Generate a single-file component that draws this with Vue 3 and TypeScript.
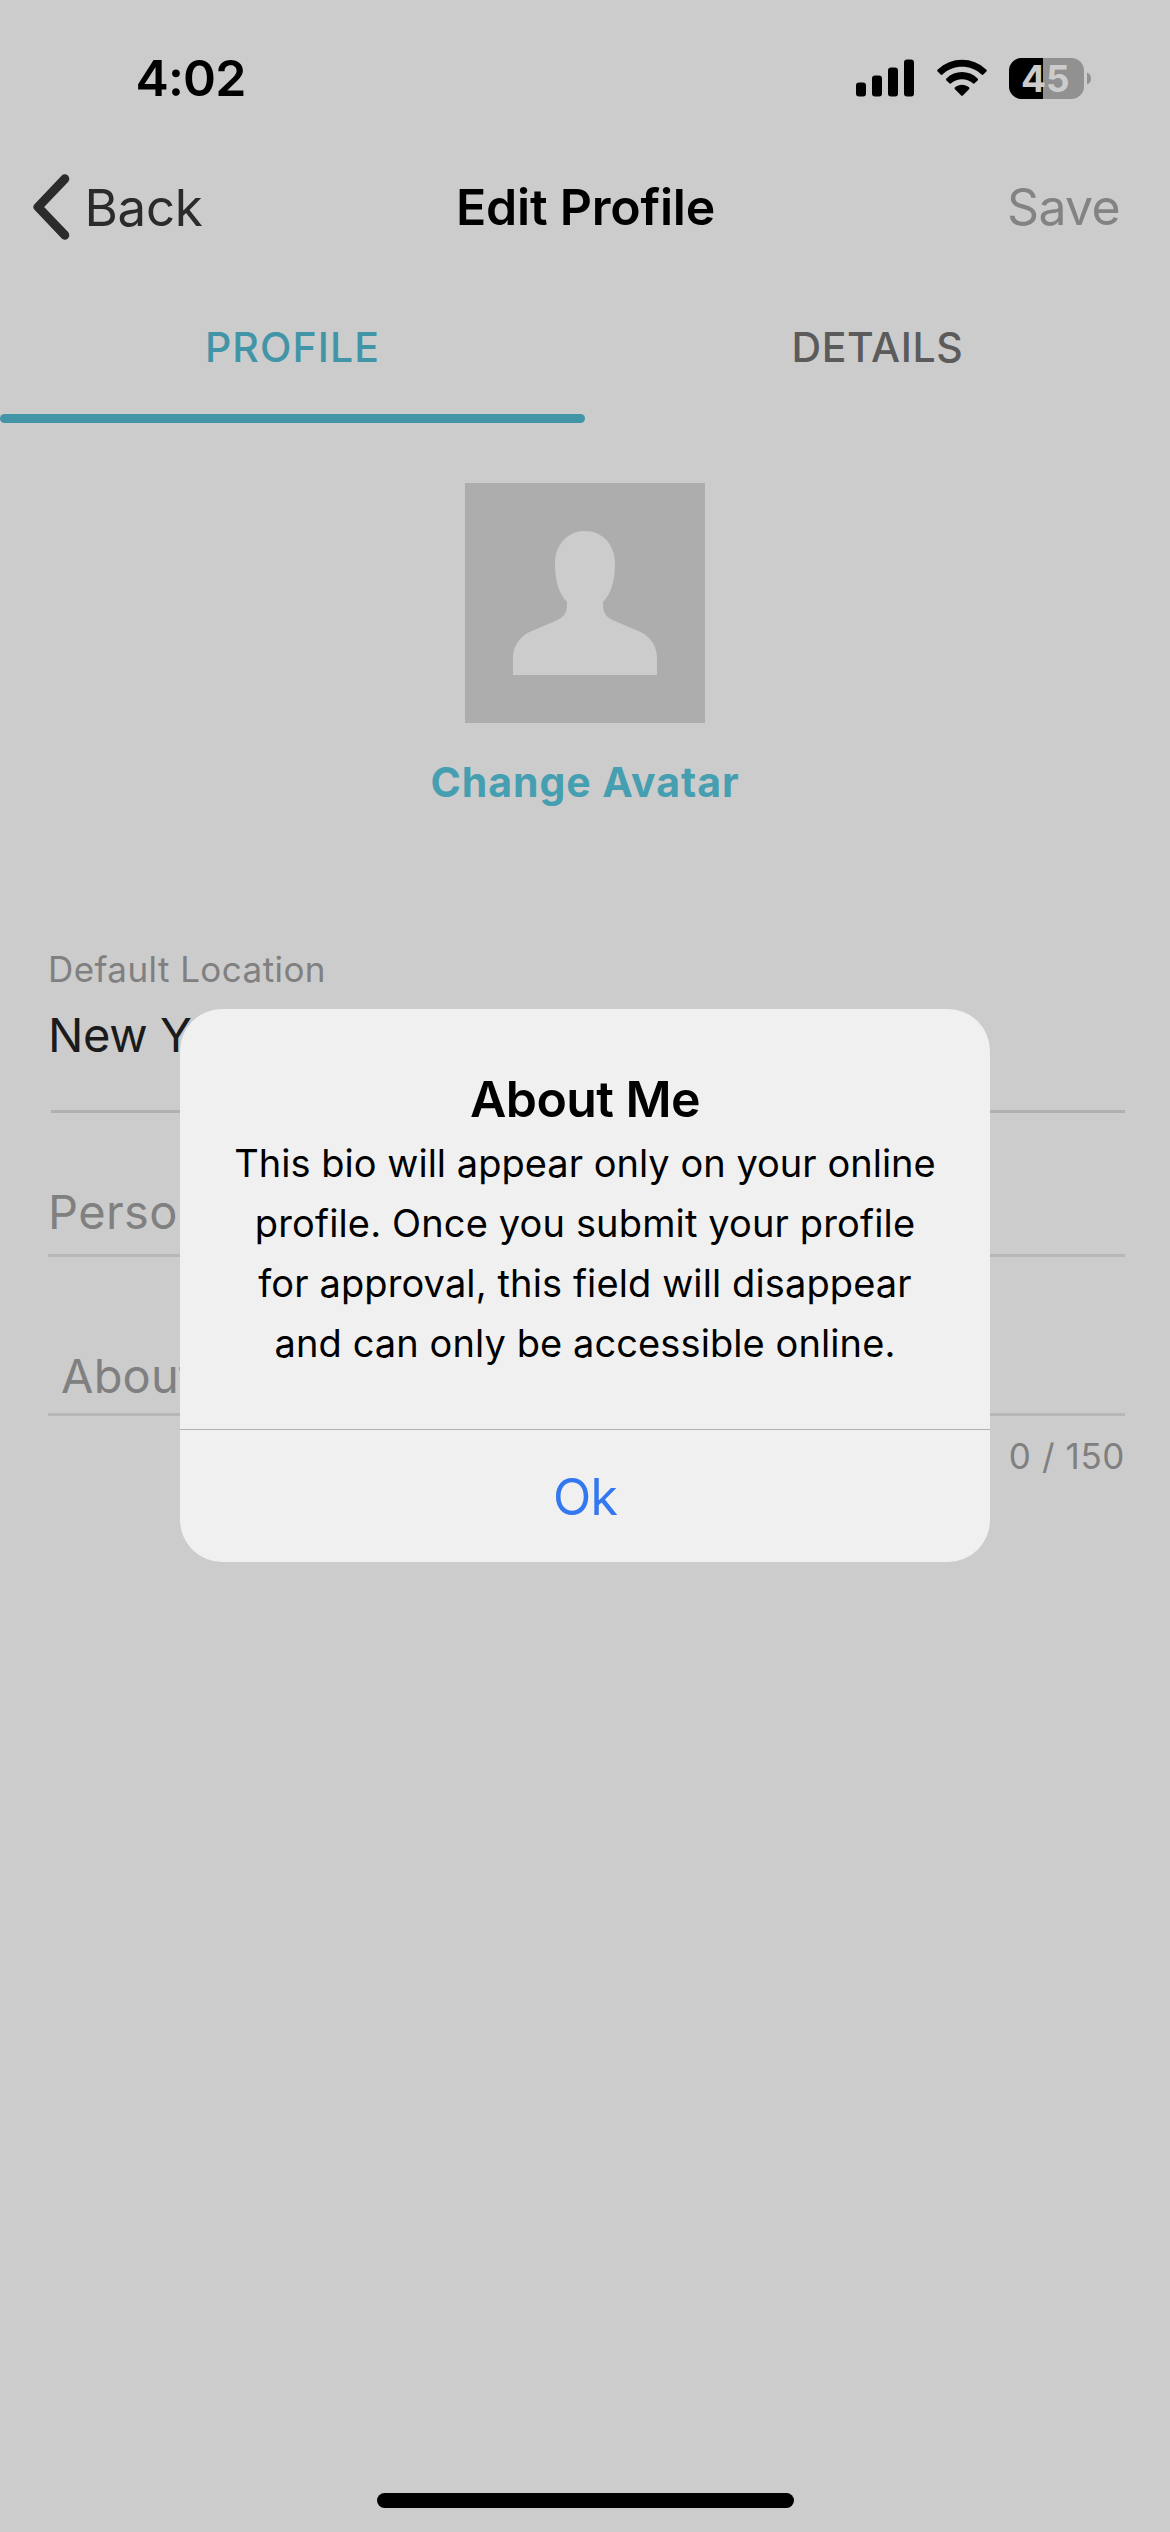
<script setup lang="ts">
import { ref } from 'vue'

interface Tab {
  id: string
  label: string
}

const tabs: Tab[] = [
  { id: 'profile', label: 'PROFILE' },
  { id: 'details', label: 'DETAILS' },
]
const activeTab = ref('profile')
const bioLimit = 150
const bio = ref('')

const dialogLines = [
  { text: 'This bio will appear only on your online', spacing: 0.02 },
  { text: 'profile. Once you submit your profile', spacing: 0.14 },
  { text: 'for approval, this field will disappear', spacing: 0.11 },
  { text: 'and can only be accessible online.', spacing: 0.09 },
]
</script>

<template>
  <div class="screen">
    <header class="status-bar">
      <span class="time">4:02</span>
      <div class="status-icons">
        <svg class="signal" width="58" height="38" viewBox="0 0 58 38">
          <rect x="0" y="23.5" width="10" height="14" rx="3" />
          <rect x="16" y="16.5" width="10" height="21" rx="3" />
          <rect x="32" y="8.5" width="10" height="29" rx="3" />
          <rect x="48" y="0.5" width="10" height="37" rx="3" />
        </svg>
        <svg class="wifi" width="50" height="38" viewBox="0 0 50 38">
          <path d="M0.8 10.6 C14 -2.7 36 -2.7 49.2 10.6 Q50.3 11.6 49.3 12.6 L46.4 15.5 Q45.5 16.3 44.6 15.5 C33.6 5.2 16.4 5.2 5.4 15.5 Q4.5 16.3 3.6 15.5 L0.7 12.6 Q-0.3 11.6 0.8 10.6Z" />
          <path d="M9.4 19.4 C18.2 11 31.8 11 40.6 19.4 Q41.6 20.4 40.6 21.4 L37.6 24.3 Q36.7 25.1 35.8 24.3 C29.6 18.8 20.4 18.8 14.2 24.3 Q13.3 25.1 12.4 24.3 L9.4 21.4 Q8.4 20.4 9.4 19.4Z" />
          <path d="M18 28.2 C22 24.8 28 24.8 32 28.2 Q33 29.2 32 30.2 L25.8 36.6 Q25 37.4 24.2 36.6 L18 30.2 Q17 29.2 18 28.2Z" />
        </svg>
        <svg class="battery" width="83" height="41" viewBox="0 0 83 41">
          <path d="M34 0H62.5A12.5 12.5 0 0 1 75 12.5V28.5A12.5 12.5 0 0 1 62.5 41H34Z" fill="#919191" />
          <path d="M34 0H12.5A12.5 12.5 0 0 0 0 12.5V28.5A12.5 12.5 0 0 0 12.5 41H34Z" fill="#000" />
          <path d="M78 14.5C83.300 16 83.300 25 78 26.5Z" fill="#919191" />
          <text x="12" y="34" class="battery-level">45</text>
        </svg>
      </div>
    </header>

    <nav class="nav-bar">
      <button class="back" type="button">
        <svg width="38" height="66" viewBox="0 0 38 66">
          <path d="M32.8 4.8L6 33L32.8 61.200" />
        </svg>
        <span>Back</span>
      </button>
      <h1 class="title">Edit Profile</h1>
      <button class="save" type="button">Save</button>
    </nav>

    <div class="tabs">
      <button
        v-for="tab in tabs"
        :key="tab.id"
        type="button"
        class="tab"
        :class="[tab.id, { active: tab.id === activeTab }]"
        @click="activeTab = tab.id"
      >
        <span class="tab-label">{{ tab.label }}</span>
        <span class="tab-line"></span>
      </button>
    </div>

    <main class="content">
      <div class="avatar-block">
        <svg class="avatar" width="240" height="240" viewBox="0 0 240 240">
          <path d="M120 48C103 48 90 61 90 81C90 98 94.500 112 102 119C102.500 128 100 133.500 92.500 137L64.500 149C54 154 48 164 48 175V192H192V175C192 164 186 154 175.500 149L147.500 137C140 133.500 137.500 128 138 119C145.500 112 150 98 150 81C150 61 137 48 120 48Z" />
        </svg>
        <button class="change-avatar" type="button">Change Avatar</button>
      </div>

      <section class="field location">
        <label class="caption">Default Location</label>
        <div class="value">New York</div>
      </section>
      <section class="field personal">
        <div class="placeholder">Personal</div>
      </section>
      <section class="field about">
        <div class="placeholder">About Me</div>
      </section>
      <div class="counter">{{ bio.length }} / {{ bioLimit }}</div>
    </main>

    <div class="home-indicator"></div>

    <div class="dialog" role="dialog">
      <div class="dialog-body">
        <h2 class="dialog-title">About Me</h2>
        <p class="dialog-text">
          <span v-for="line in dialogLines" :key="line.text" :style="{ letterSpacing: line.spacing + 'px' }">{{ line.text }}</span>
        </p>
      </div>
      <button class="dialog-ok" type="button">Ok</button>
    </div>
  </div>
</template>

<style>
body {
  background: #ccc;
}
</style>

<style scoped>
.screen {
  position: relative;
  box-sizing: border-box;
  display: flex;
  flex-direction: column;
  width: 1170px;
  height: 2532px;
  padding-bottom: 24px;
  overflow: hidden;
  background: #ccc;
  font-family: Inter, "Liberation Sans", sans-serif;
  color: #000;
}

button {
  margin: 0;
  padding: 0;
  border: 0;
  background: none;
  font: inherit;
  color: inherit;
}

.status-bar {
  display: flex;
  flex: none;
  align-items: center;
  justify-content: space-between;
  height: 156px;
  padding: 0 78px 0 135.5px;
}

.time {
  font-size: 50px;
  font-weight: 600;
  letter-spacing: -0.84px;
}

.status-icons {
  display: flex;
  align-items: center;
}

.wifi {
  margin: 0 22px 0 23px;
}

.battery {
  overflow: visible;
}

.battery-level {
  font-size: 37px;
  font-weight: 700;
  fill: #ccc;
}

.nav-bar {
  display: grid;
  flex: none;
  grid-template-columns: 1fr auto 1fr;
  align-items: center;
  height: 102px;
  padding: 0 50px 0 32px;
}

.back {
  display: flex;
  align-items: center;
  gap: 14.5px;
  font-size: 51px;
  letter-spacing: -0.31px;
  color: #2b2b2b;
}

.back path {
  fill: none;
  stroke: #2b2b2b;
  stroke-width: 9px;
  stroke-linecap: round;
  stroke-linejoin: round;
}

.title {
  margin: 0 0 0 19px;
  font-size: 50px;
  font-weight: 600;
  letter-spacing: -0.23px;
}

.save {
  justify-self: end;
  font-size: 50px;
  letter-spacing: -0.7px;
  color: #838383;
}

.tabs {
  display: flex;
  flex: none;
  height: 165px;
}

.tab {
  display: flex;
  flex: 1;
  flex-direction: column;
  font-size: 41px;
  font-weight: 500;
  color: #5b5b5b;
}

.tab-label {
  align-self: center;
  height: 156px;
  line-height: 179px;
}

.tab.profile {
  letter-spacing: 1.08px;
}

.tab.details {
  letter-spacing: 0.64px;
}

.tab-line {
  flex: none;
  align-self: stretch;
  height: 9px;
  border-radius: 4.5px;
}

.tab.active {
  color: #4195a7;
}

.tab.active .tab-line {
  background: #4195a7;
}

.content {
  display: flex;
  flex-direction: column;
  padding: 60px 45px 0 48px;
}

.avatar-block {
  display: flex;
  flex-direction: column;
  align-items: center;
  margin-right: 3px;
}

.avatar {
  background: #adadad;
  fill: #ccc;
}

.change-avatar {
  margin-top: 29px;
  font-size: 41px;
  font-weight: 700;
  line-height: 60px;
  letter-spacing: 0.95px;
  color: #469fb1;
}

.field {
  border-bottom: 3px solid #b7b7b7;
}

.caption {
  display: block;
  font-size: 35px;
  line-height: 50px;
  letter-spacing: 0.43px;
  color: #808080;
}

.value,
.placeholder {
  font-size: 47px;
  line-height: 60px;
}

.value {
  margin-top: 11px;
  letter-spacing: -0.4px;
  color: #1b1b1b;
}

.placeholder {
  color: #808080;
}

.location {
  margin-top: 132px;
  margin-left: 3px;
  padding-bottom: 45px;
  border-color: #b0b0b0;
}

.location .caption,
.location .value {
  margin-left: -3px;
}

.personal {
  margin-top: 69px;
  padding-bottom: 12px;
}

.personal .placeholder {
  letter-spacing: 0.4px;
}

.about {
  margin-top: 89px;
  padding: 0 0 7px 13px;
}

.about .placeholder {
  letter-spacing: 0.2px;
}

.counter {
  align-self: flex-end;
  margin-top: 15px;
  font-size: 35px;
  line-height: 50px;
  letter-spacing: 0.6px;
  color: #808080;
}

.home-indicator {
  flex: none;
  align-self: center;
  width: 417px;
  height: 15px;
  margin-top: auto;
  border-radius: 7.5px;
  background: #000;
}

.dialog {
  position: absolute;
  top: 1009px;
  left: 180px;
  width: 810px;
  height: 553px;
  overflow: hidden;
  border-radius: 42px;
  background: #f0f0f0;
  text-align: center;
}

.dialog-body {
  box-sizing: border-box;
  height: 421px;
  padding-top: 60px;
  border-bottom: 1px solid #b0b0b0;
}

.dialog-title {
  margin: 0;
  font-size: 50px;
  font-weight: 600;
  line-height: 60px;
  letter-spacing: -0.57px;
}

.dialog-text {
  display: flex;
  flex-direction: column;
  margin: 4px 0 0;
  font-size: 38px;
  line-height: 60px;
}

.dialog-ok {
  display: block;
  width: 100%;
  height: 132px;
  padding-top: 1px;
  font-size: 50px;
  letter-spacing: -0.8px;
  color: #3478f0;
}
</style>
